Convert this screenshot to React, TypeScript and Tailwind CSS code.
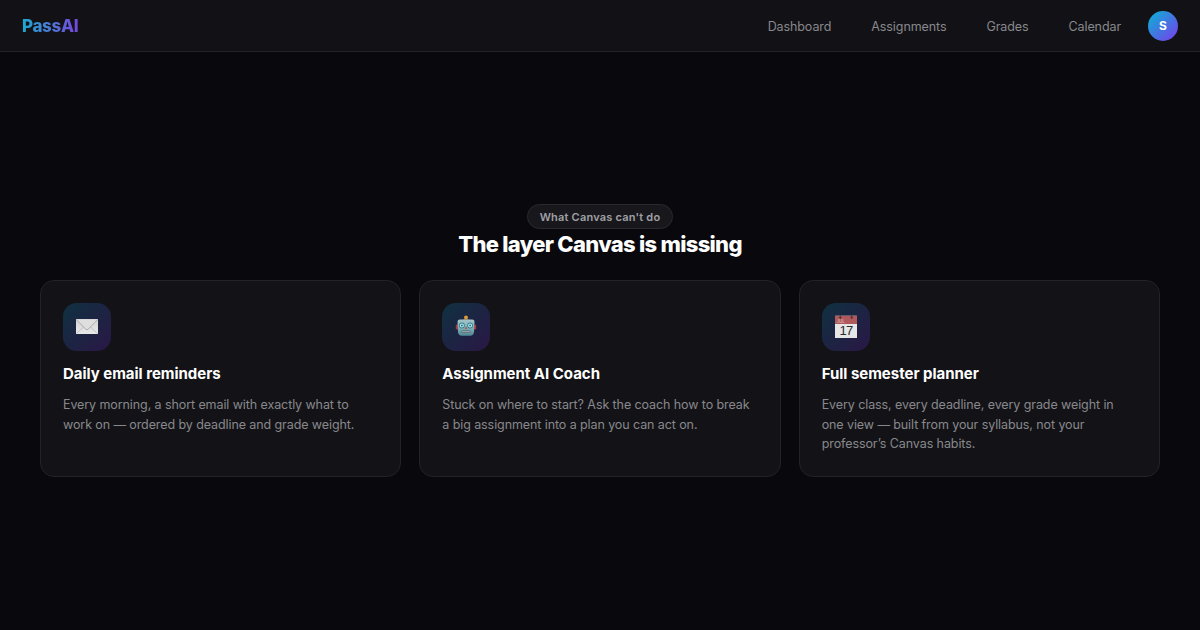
import type { ReactNode } from "react";

const NAV_LINKS = ["Dashboard", "Assignments", "Grades", "Calendar"];

function MailIcon() {
  return (
    <svg width="24" height="24" viewBox="0 0 24 24" aria-hidden="true">
      <defs>
        <linearGradient id="mail-paper" x1="0" y1="0" x2="0" y2="1">
          <stop offset="0" stopColor="#d2d2d4" />
          <stop offset="1" stopColor="#e9e9ea" />
        </linearGradient>
      </defs>
      <rect x="1" y="4" width="22" height="15" rx="0.6" fill="url(#mail-paper)" />
      <path d="M1.4 18.6 8.8 11.6M22.6 18.6 15.2 11.6" stroke="#b4b4b7" strokeWidth="0.7" fill="none" />
      <path
        d="M1.3 4.5 10.6 14.1Q12 15.4 13.4 14.1L22.7 4.5"
        stroke="#a0a0a4"
        strokeWidth="0.8"
        fill="#dededf"
      />
    </svg>
  );
}

function RobotIcon() {
  return (
    <svg width="24" height="24" viewBox="0 0 24 24" aria-hidden="true">
      <defs>
        <linearGradient id="robot-face" x1="0" y1="0" x2="0" y2="1">
          <stop offset="0" stopColor="#a5c4c9" />
          <stop offset="0.55" stopColor="#7eadb6" />
          <stop offset="1" stopColor="#4f8794" />
        </linearGradient>
      </defs>
      <rect x="1.8" y="9.5" width="3" height="5" rx="1.3" fill="#a43d3c" />
      <rect x="19.2" y="9.5" width="3" height="5" rx="1.3" fill="#a43d3c" />
      <path d="M10 3.5h4l.8 1.6H9.2z" fill="#8a5a3c" />
      <circle cx="12" cy="2.3" r="1.9" fill="#dd9b38" />
      <path
        d="M5.8 4.5h12.4q2.3 0 2.3 2.3l-.5 10.2q-.3 3.7-3.8 3.7H7.8q-3.500 0-3.800-3.700L3.500 6.800q0-2.300 2.300-2.300z"
        fill="url(#robot-face)"
      />
      <circle cx="7.9" cy="10.5" r="2.9" fill="#39808f" />
      <circle cx="16.1" cy="10.5" r="2.9" fill="#39808f" />
      <circle cx="7.9" cy="10.5" r="2" fill="#b5f0f2" />
      <circle cx="16.1" cy="10.5" r="2" fill="#b5f0f2" />
      <circle cx="7.9" cy="10.5" r="1" fill="#337583" />
      <circle cx="16.1" cy="10.5" r="1" fill="#337583" />
      <path d="m12 11.5 1.4 2.3h-2.8z" fill="#bb4542" />
      <rect x="7.5" y="15.5" width="9" height="2.4" rx="1.2" fill="#3e5260" />
      <path d="M9 15.900v1.600M11 15.900v1.600M13 15.900v1.600M15 15.900v1.600" stroke="#e4eeee" strokeWidth="1" />
    </svg>
  );
}

function CalendarIcon() {
  return (
    <svg width="24" height="24" viewBox="0 0 24 24" aria-hidden="true">
      <rect x="1" y="0.8" width="22" height="22.3" rx="0.5" fill="#e6e6e7" />
      <path d="M1 1.3q0-.5.5-.5h21q.5 0 .5.500V9H1z" fill="#b0595c" />
      <circle cx="6.3" cy="2.6" r="1.1" fill="#48282c" />
      <circle cx="17.7" cy="2.6" r="1.1" fill="#48282c" />
      <path d="M6.3 0v2.5M17.7 0v2.5" stroke="#39383c" strokeWidth="0.7" />
      <text x="2.4" y="8" fontSize="4.5" fontFamily="Inter, sans-serif" fontWeight="600" fill="#d9a5a7">
        JUL
      </text>
      <text
        x="12"
        y="20.3"
        fontSize="13"
        fontFamily="'Liberation Sans', sans-serif"
        letterSpacing="-0.8"
        textAnchor="middle"
        fill="#2b2b2e"
      >
        17
      </text>
    </svg>
  );
}

interface Feature {
  title: string;
  body: string;
  icon: ReactNode;
}

const FEATURES: Feature[] = [
  {
    title: "Daily email reminders",
    body: "Every morning, a short email with exactly what to work on — ordered by deadline and grade weight.",
    icon: <MailIcon />,
  },
  {
    title: "Assignment AI Coach",
    body: "Stuck on where to start? Ask the coach how to break a big assignment into a plan you can act on.",
    icon: <RobotIcon />,
  },
  {
    title: "Full semester planner",
    body: "Every class, every deadline, every grade weight in one view — built from your syllabus, not your professor’s Canvas habits.",
    icon: <CalendarIcon />,
  },
];

function FeatureCard({ title, body, icon }: Feature) {
  return (
    <article className="rounded-[14px] border border-[#222227] bg-[#131317] p-[22px]">
      <div className="mb-3 flex size-12 items-center justify-center rounded-[14px] bg-linear-135/srgb from-[#0f3140] to-[#2a1746]">
        {icon}
      </div>
      <h3 className="mb-2.5 text-[15px] leading-[22px] font-bold tracking-[-0.02px] text-white">{title}</h3>
      <p className="text-[12.5px] leading-[19.5px] tracking-[-0.09px] text-[#88888c]">{body}</p>
    </article>
  );
}

export default function App() {
  return (
    <div className="flex h-screen flex-col bg-[#09090d] font-['Inter',sans-serif]">
      <header className="flex h-13 shrink-0 items-center justify-between border-b border-[#242428] bg-[#121216] px-[22px]">
        <span className="bg-linear-90/srgb from-[#1ea8d0] to-[#7747dc] bg-clip-text pt-0.5 text-[17px] font-extrabold tracking-[-0.02em] text-transparent">
          PassAI
        </span>
        <div className="flex items-center gap-[27px]">
          <nav className="flex gap-10 pt-[3px] text-[12.5px] tracking-[-0.09px] text-[#88888c]">
            {NAV_LINKS.map((link) => (
              <a key={link} href="#">
                {link}
              </a>
            ))}
          </nav>
          <div className="flex size-[30px] items-center justify-center rounded-full bg-linear-135/srgb from-[#06b6d4] to-[#7c3aed] text-xs font-bold text-white">
            S
          </div>
        </div>
      </header>

      <main className="flex flex-1 flex-col justify-center px-10 pb-px">
        <div className="mb-[21px] flex flex-col items-center">
          <span className="flex h-[25px] items-center rounded-full border border-[#29292e] bg-[#18181c] px-3 text-[11px] font-semibold tracking-[0.2px] text-[#a0a0a6]">
            What Canvas can't do
          </span>
          <h2 className="mt-px text-[22px] leading-[29px] font-extrabold tracking-[-0.7px] text-white">
            The layer Canvas is missing
          </h2>
        </div>
        <div className="grid grid-cols-3 gap-[18px]">
          {FEATURES.map((f) => (
            <FeatureCard key={f.title} {...f} />
          ))}
        </div>
      </main>
    </div>
  );
}
